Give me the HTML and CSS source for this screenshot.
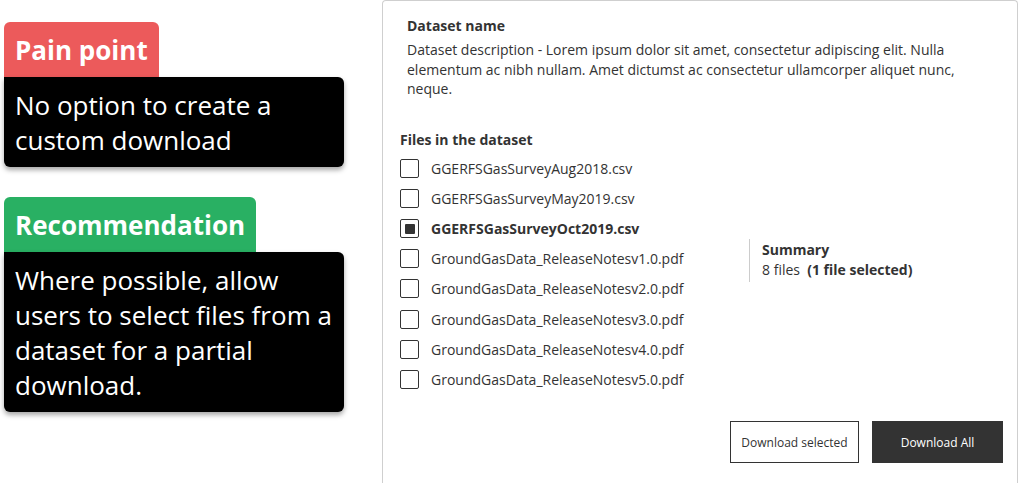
FILE: index.html
```html
<!DOCTYPE html>
<html lang="en">
<head>
<meta charset="utf-8">
<title>Custom download</title>
<link rel="stylesheet" href="styles.css">
</head>
<body>
<div class="page">
  <aside class="notes">
    <section class="note">
      <div class="tag tag-red">Pain point</div>
      <div class="note-body">No option to create a custom download</div>
    </section>
    <section class="note">
      <div class="tag tag-green">Recommendation</div>
      <div class="note-body">Where possible, allow users to select files from a dataset for a partial download.</div>
    </section>
  </aside>

  <main class="panel">
    <header class="dataset">
      <h1 class="dataset-name">Dataset name</h1>
      <p class="dataset-desc">Dataset description - Lorem ipsum dolor sit amet, consectetur adipiscing elit. Nulla elementum ac nibh nullam. Amet dictumst ac consectetur ullamcorper aliquet nunc, neque.</p>
    </header>

    <h2 class="files-title">Files in the dataset</h2>
    <div class="files-area">
      <ul class="file-list">
        <li class="file"><span class="box"></span><span class="file-name">GGERFSGasSurveyAug2018.csv</span></li>
        <li class="file"><span class="box"></span><span class="file-name">GGERFSGasSurveyMay2019.csv</span></li>
        <li class="file file-selected"><span class="box box-checked"></span><span class="file-name">GGERFSGasSurveyOct2019.csv</span></li>
        <li class="file"><span class="box"></span><span class="file-name">GroundGasData_ReleaseNotesv1.0.pdf</span></li>
        <li class="file"><span class="box"></span><span class="file-name">GroundGasData_ReleaseNotesv2.0.pdf</span></li>
        <li class="file"><span class="box"></span><span class="file-name">GroundGasData_ReleaseNotesv3.0.pdf</span></li>
        <li class="file"><span class="box"></span><span class="file-name">GroundGasData_ReleaseNotesv4.0.pdf</span></li>
        <li class="file"><span class="box"></span><span class="file-name">GroundGasData_ReleaseNotesv5.0.pdf</span></li>
      </ul>
      <div class="summary">
        <div class="summary-title">Summary</div>
        <div class="summary-text">8 files&nbsp; <strong>(1 file selected)</strong></div>
      </div>
    </div>

    <div class="actions">
      <button class="btn btn-outline">Download selected</button>
      <button class="btn btn-dark">Download All</button>
    </div>
  </main>
</div>
</body>
</html>
```

FILE: styles.css
```css
* {
  box-sizing: border-box;
}

html, body {
  margin: 0;
  padding: 0;
  background: #ffffff;
  overflow: hidden;
}

body {
  font-family: "Open Sans", "Noto Sans", sans-serif;
  color: #333333;
}

.page {
  display: flex;
  align-items: flex-start;
  padding-left: 4px;
  column-gap: 38px;
  width: 1019px;
  height: 483px;
}

/* ---------- Left notes ---------- */
.notes {
  width: 340px;
  padding-top: 22px;
  display: flex;
  flex-direction: column;
  row-gap: 30px;
}

.note {
  display: flex;
  flex-direction: column;
  align-items: flex-start;
}

.tag {
  height: 55px;
  padding: 0 11px 0 11px;
  display: flex;
  align-items: center;
  color: #ffffff;
  font-weight: 700;
  font-size: 26px;
  border-radius: 6px 6px 0 0;
}

.tag-red {
  background: #ec5a5b;
}

.tag-green {
  background: #29b063;
}

.note-body {
  width: 340px;
  background: #000000;
  color: #ffffff;
  font-size: 26px;
  line-height: 35px;
  padding: 11px 10px 9px 11px;
  border-radius: 0 6px 6px 6px;
  box-shadow: 0 3px 5px rgba(0, 0, 0, 0.35);
}

/* ---------- Right panel ---------- */
.panel {
  width: 636px;
  height: 500px;
  border: 1px solid #cfcfcf;
  border-bottom: none;
  border-radius: 4px 4px 0 0;
  padding: 15px 14px 0 17px;
  display: flex;
  flex-direction: column;
}

.dataset {
  padding-left: 7px;
  width: 587px;
}

.dataset-name {
  margin: 0 0 4px;
  font-size: 14px;
  line-height: 20px;
  font-weight: 700;
}

.dataset-desc {
  margin: 0;
  font-size: 14px;
  line-height: 19.5px;
}

.files-title {
  margin: 31px 0 4px;
  font-size: 14px;
  line-height: 20px;
  font-weight: 700;
}

.files-area {
  display: flex;
  align-items: flex-start;
}

.file-list {
  list-style: none;
  margin: 0;
  padding: 0;
  width: 349px;
}

.file {
  height: 30.1px;
  display: flex;
  align-items: center;
  column-gap: 12px;
  font-size: 14px;
}

.file-selected .file-name {
  font-weight: 700;
}

.box {
  width: 19px;
  height: 19px;
  border: 1.5px solid #333333;
  border-radius: 2px;
  display: flex;
  align-items: center;
  justify-content: center;
  flex: none;
}

.box-checked::after {
  content: "";
  width: 10px;
  height: 10px;
  background: #333333;
  border-radius: 1px;
}

.summary {
  margin-top: 85px;
  border-left: 1px solid #cccccc;
  padding: 1px 0 1px 12px;
  font-size: 14px;
  line-height: 20.5px;
}

.summary-title {
  font-weight: 700;
}

.summary-text strong {
  font-weight: 700;
}

.actions {
  margin-top: 27px;
  display: flex;
  justify-content: flex-end;
  column-gap: 13px;
}

.btn {
  height: 42px;
  font-family: "Open Sans", "Noto Sans", sans-serif;
  font-size: 12px;
  cursor: pointer;
  border-radius: 0;
}

.btn-outline {
  width: 129px;
  background: #ffffff;
  color: #333333;
  border: 1px solid #333333;
}

.btn-dark {
  width: 131px;
  background: #333333;
  color: #ffffff;
  border: 1px solid #333333;
}
```
